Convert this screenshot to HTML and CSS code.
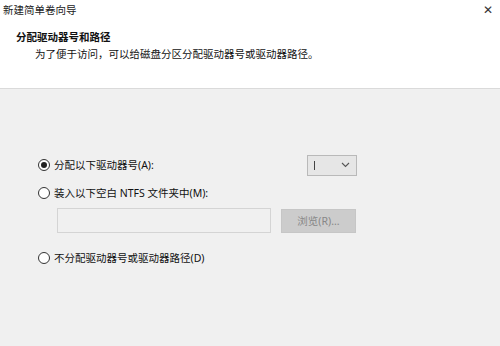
FILE: index.html
```html
<!DOCTYPE html>
<html lang="zh-CN">
<head>
    <meta charset="UTF-8">
    <title>新建简单卷向导</title>
    <link rel="stylesheet" href="styles.css">
</head>
<body>
    <div class="wizard">
        <div class="header">
            <div class="titlebar">
                <span class="title">新建简单卷向导</span>
                <span class="close">✕</span>
            </div>
            <div class="page-head">
                <h1>分配驱动器号和路径</h1>
                <p>为了便于访问，可以给磁盘分区分配驱动器号或驱动器路径。</p>
            </div>
        </div>

        <div class="content">
            <div class="row row-letter">
                <label class="option">
                    <span class="radio checked"></span>
                    分配以下驱动器号(A):
                </label>
                <div class="select">
                    <span class="select-value"></span>
                    <svg width="9" height="6" viewBox="0 0 9 6">
                        <path d="M1 1 L4.5 4.5 L8 1" fill="none" stroke="#555" stroke-width="1.1"/>
                    </svg>
                </div>
            </div>
            <div class="row row-mount">
                <label class="option">
                    <span class="radio"></span>
                    装入以下空白 NTFS 文件夹中(M):
                </label>
            </div>
            <div class="row row-path">
                <div class="textbox"></div>
                <button class="btn" disabled>浏览(R)...</button>
            </div>
            <div class="row row-none">
                <label class="option">
                    <span class="radio"></span>
                    不分配驱动器号或驱动器路径(D)
                </label>
            </div>
        </div>
    </div>
</body>
</html>
```

FILE: styles.css
```css
/* Dasar halaman */
body {
    margin: 0;
    font-family: "Noto Sans", "Noto Sans CJK SC", sans-serif;
    font-size: 10.5px;
    color: #111;
}

.wizard {
    width: 500px;
    height: 346px;
    display: flex;
    flex-direction: column;
    background: #f0f0f0;
}

/* Header putih */
.header {
    height: 88px;
    background: #fff;
    border-bottom: 1px solid #dadada;
}

.titlebar {
    display: flex;
    justify-content: space-between;
    align-items: center;
    height: 19px;
    padding: 0 7px 0 3px;
}

.title {
    color: #222;
}

.close {
    font-family: "DejaVu Sans", sans-serif;
    font-size: 12px;
    line-height: 12px;
    color: #333;
}

.page-head {
    padding: 10px 0 0 16px;
}

.page-head h1 {
    margin: 0;
    font-size: 10.5px;
    font-weight: bold;
    line-height: 16px;
}

.page-head p {
    margin: 1px 0 0 19px;
    line-height: 16px;
}

/* Isi */
.content {
    flex: 1;
    padding: 65px 0 0 38px;
}

.row {
    display: flex;
    align-items: center;
}

.row-letter {
    width: 319px;
    height: 22px;
    justify-content: space-between;
}

.row-mount {
    margin-top: 9px;
    height: 16px;
}

.row-path {
    margin: 7px 0 0 19px;
    gap: 10px;
}

.row-none {
    margin-top: 17px;
    height: 16px;
}

.option {
    display: flex;
    align-items: center;
    gap: 4px;
    line-height: 16px;
}

.radio {
    width: 10px;
    height: 10px;
    border: 1px solid #333;
    border-radius: 50%;
    background: #fff;
    position: relative;
}

.radio.checked::after {
    content: "";
    position: absolute;
    left: 2px;
    top: 2px;
    width: 6px;
    height: 6px;
    border-radius: 50%;
    background: #222;
}

.select {
    box-sizing: border-box;
    width: 50px;
    height: 21px;
    border: 1px solid #b9b9b9;
    background: #e6e6e6;
    display: flex;
    align-items: center;
    justify-content: space-between;
    padding: 0 6px 0 6px;
}

/* huruf drive "I" digambar sebagai garis tipis */
.select-value {
    width: 1px;
    height: 9px;
    background: #444;
}

.textbox {
    box-sizing: border-box;
    width: 214px;
    height: 25px;
    border: 1px solid #d4d4d4;
    background: #f0f0f0;
}

.btn {
    box-sizing: border-box;
    width: 75px;
    height: 24px;
    border: 1px solid #c6c6c6;
    background: #cccccc;
    color: #888;
    font-family: inherit;
    font-size: 10.5px;
    padding: 0;
}
```
